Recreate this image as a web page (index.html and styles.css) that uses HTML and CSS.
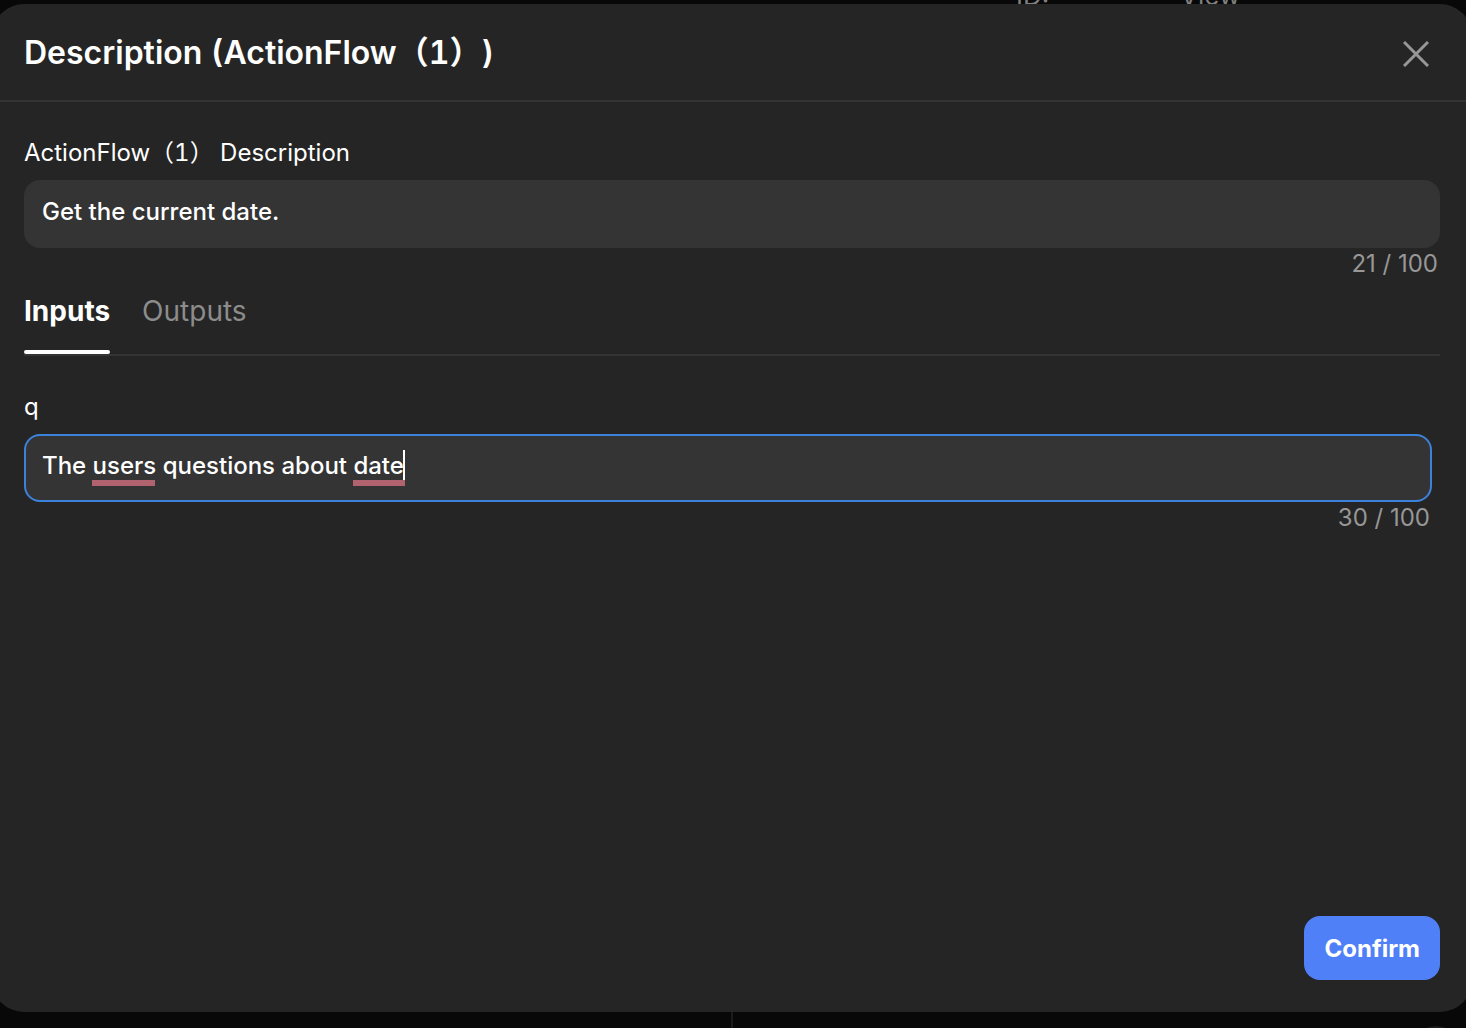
FILE: index.html
```html
<!DOCTYPE html>
<html lang="en">
<head>
<meta charset="utf-8">
<meta name="viewport" content="width=device-width, initial-scale=1">
<title>Description</title>
<link rel="stylesheet" href="styles.css">
</head>
<body>
<div class="backdrop" aria-hidden="true">
  <span class="backdrop-id">ID:</span>
  <span class="backdrop-view">View</span>
  <div class="backdrop-divider"></div>
  <div class="backdrop-knob"></div>
</div>
<main class="dialog" role="dialog" aria-labelledby="dialog-title">
  <header class="dialog-header">
    <h1 class="dialog-title" id="dialog-title">Description (ActionFlow<span class="wide">（</span>1<span class="wide">）</span>)</h1>
    <button class="close" type="button" aria-label="Close">
      <svg width="26" height="26" viewBox="0 0 26 26" fill="none" stroke="currentColor" stroke-width="3"><path d="M1 1L25 25M25 1L1 25"/></svg>
    </button>
  </header>
  <form class="dialog-body">
    <div class="field">
      <label class="label" for="description">ActionFlow<span class="wide">（</span>1<span class="wide">）</span> Description</label>
      <div class="control"><input class="input" id="description" type="text" value="Get the current date." maxlength="100"></div>
      <div class="count">21 / 100</div>
    </div>
    <div class="tabs" role="tablist">
      <button class="tab tab-active" type="button" role="tab" aria-selected="true">Inputs</button>
      <button class="tab" type="button" role="tab" aria-selected="false">Outputs</button>
    </div>
    <div class="field field-param">
      <label class="label" for="q">q</label>
      <div class="control">
        <input class="input input-focused" id="q" type="text" value="The users questions about date" maxlength="100" spellcheck="false">
        <span class="spelling spelling-users"></span>
        <span class="spelling spelling-date"></span>
        <span class="caret"></span>
      </div>
      <div class="count">30 / 100</div>
    </div>
    <div class="actions"><button class="confirm" type="button">Confirm</button></div>
  </form>
</main>
</body>
</html>
```
FILE: styles.css
```css
* {
  box-sizing: border-box;
}

body {
  margin: 0;
  min-height: 100vh;
  display: flex;
  position: relative;
  overflow: hidden;
  background: #080808;
  color: #fff;
  font-family: Inter, "Noto Sans CJK SC", sans-serif;
  text-spacing-trim: space-all;
}

button,
input {
  font: inherit;
  color: inherit;
  border: 0;
}

button {
  padding: 0;
  background: none;
  cursor: pointer;
}

.wide {
  font-family: "Noto Sans CJK SC", sans-serif;
  line-height: 0;
}

.backdrop {
  position: absolute;
  inset: 0;
  overflow: hidden;
  color: #808080;
  font-size: 26px;
  line-height: 28px;
}

.backdrop-id,
.backdrop-view {
  position: absolute;
  top: -18px;
  left: 1016px;
}

.backdrop-view {
  left: 1180px;
}

.backdrop-divider {
  position: absolute;
  left: 731px;
  bottom: 0;
  width: 2px;
  height: 20px;
  background: #1c1c1c;
}

.backdrop-knob {
  position: absolute;
  right: 6px;
  bottom: -46px;
  width: 48px;
  height: 48px;
  border-radius: 50%;
  background: #1c1c1c;
}

.dialog {
  position: relative;
  flex: 1;
  display: flex;
  flex-direction: column;
  margin: 4px -6px 16px -8px;
  border-radius: 32px;
  background: #252525;
}

.dialog-header {
  display: flex;
  align-items: center;
  justify-content: space-between;
  height: 98px;
  padding: 2px 43px 0 32px;
  border-bottom: 2px solid #343434;
}

.dialog-title {
  margin: 0;
  font-size: 32px;
  font-weight: 600;
  line-height: 40px;
  font-variant-numeric: tabular-nums;
}

.close {
  display: flex;
  padding-top: 2px;
  color: #979797;
}

.dialog-body {
  flex: 1;
  display: flex;
  flex-direction: column;
  padding: 36px 32px 32px;
}

.field {
  display: flex;
  flex-direction: column;
}

.field-param {
  margin: 36px 8px 0 0;
}

.label {
  height: 42px;
  font-size: 24px;
  line-height: 30px;
  font-variant-numeric: tabular-nums;
}

.control {
  position: relative;
  display: flex;
}

.input {
  flex: 1;
  height: 68px;
  padding: 0 16px 6px;
  border: 2px solid #343434;
  border-radius: 16px;
  outline: 0;
  background: #343434;
  font-size: 24px;
  font-weight: 450;
}

.input-focused {
  border-color: #3c82dc;
}

.spelling {
  position: absolute;
  top: 46px;
  height: 6px;
  background: #b0626e;
}

.spelling-users {
  left: 68px;
  width: 63px;
}

.spelling-date {
  left: 329px;
  width: 52px;
}

.caret {
  position: absolute;
  top: 16px;
  left: 379px;
  width: 2px;
  height: 30px;
  background: #fff;
}

.count {
  padding-right: 2px;
  color: #979797;
  font-size: 24px;
  line-height: 32px;
  text-align: right;
}

.tabs {
  display: flex;
  gap: 32px;
  height: 76px;
  border-bottom: 2px solid #343434;
}

.tab {
  position: relative;
  height: 74px;
  padding-bottom: 12px;
  color: #8c8c8c;
  font-size: 28px;
}

.tab-active {
  color: #fff;
  font-weight: 700;
}

.tab-active::after {
  content: "";
  position: absolute;
  left: 0;
  right: 0;
  bottom: 0;
  height: 4px;
  border-radius: 2px;
  background: #fff;
}

.actions {
  display: flex;
  justify-content: flex-end;
  margin-top: auto;
}

.confirm {
  height: 64px;
  padding: 0 20px;
  border-radius: 16px;
  background: #5080f8;
  font-size: 24px;
  font-weight: 700;
}
```
